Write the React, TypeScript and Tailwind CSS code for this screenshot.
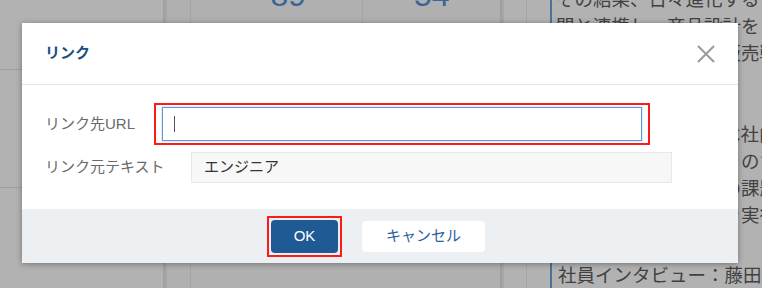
const FONT = "font-['Liberation_Sans','Noto_Sans_CJK_JP',sans-serif]";

// 右カラムの本文（モーダルの後ろに隠れる部分も含めて1行ずつ）
const ARTICLE_LINES = [
  "その結果、日々進化する",
  "門と連携し、商品設計を",
  "新たな市場に向けた販売戦略",
  "を立案しています。",
  "",
  "このように、私たちは社内",
  "地域に根ざす店舗作りのため",
  "に取り組み、現場での課題を",
  "解決するための施策を実行",
];

function CloseIcon() {
  return (
    <svg width="18" height="18" viewBox="0 0 18 18" fill="none">
      <path d="M1 1L17 17M17 1L1 17" stroke="#9a9a9a" strokeWidth="2" />
    </svg>
  );
}

function BackgroundPage() {
  return (
    <div className="flex h-full w-full bg-white">
      {/* サイドバー */}
      <div className="flex w-[163px] shrink-0 flex-col">
        <div className="h-[70px] border-b border-[#e4e4e4]" />
        <div className="h-[118px] border-b border-[#e4e4e4]" />
      </div>
      <div className="w-[4px] shrink-0 bg-gradient-to-r from-[#e2e2e2] to-[#f2f2f2]" />

      {/* 中央：数値カード */}
      <div className="flex w-[333px] shrink-0 flex-col bg-[#fdfdfd]">
        <div className="ml-[23px] flex h-[250px] border-l border-[#ececec]">
          <div className="flex w-[173px] justify-center border-r border-[#ececec] pl-[23px]">
            <span className="-mt-[21px] text-[32px] leading-none text-[#4f93d8]">89</span>
          </div>
          <div className="flex w-[137px] justify-center">
            <span className="-mt-[21px] text-[32px] leading-none text-[#4f93d8]">54</span>
          </div>
        </div>
        <div className="ml-[23px] mt-[25px] h-[40px] border-l border-t border-[#ececec]" />
      </div>
      <div className="w-[4px] shrink-0 bg-gradient-to-r from-[#e0e0e0] to-[#f4f4f4]" />

      <div className="w-[23px] shrink-0 border-r border-[#ececec]" />
      <div className="w-[23px] shrink-0" />

      {/* 右カラム：記事 */}
      <div className="flex min-w-0 flex-1 flex-col">
        <div className="-mt-[14px] border-l-2 border-[#6fa4d6] pl-[4px] text-[18.5px] leading-[27px] text-[#5e5e5e]">
          {ARTICLE_LINES.map((line, i) => (
            <div key={i} className="h-[27px] whitespace-nowrap">
              {line}
            </div>
          ))}
        </div>
        <div className="mt-[33px] whitespace-nowrap border-l-2 border-[#6fa4d6] pl-[6px] text-[18.5px] leading-[27px] text-[#5e5e5e]">
          社員インタビュー：藤田健
        </div>
      </div>
    </div>
  );
}

function LinkDialog() {
  return (
    <div className="absolute left-[22px] top-[23px] flex w-[716px] flex-col bg-white shadow-[0_1px_6px_rgba(0,0,0,0.35)]">
      {/* ヘッダー */}
      <div className="flex h-[62px] items-center justify-between border-b border-[#e6e6e6] px-[23px]">
        <h2 className="text-[15px] font-bold text-[#1b4f7f]">リンク</h2>
        <button className="flex h-[18px] w-[18px] items-center justify-center">
          <CloseIcon />
        </button>
      </div>

      {/* 入力欄 */}
      <div className="px-[23px] pb-[26px] pt-[18px]">
        <div className="flex items-center">
          <label className="w-[109px] shrink-0 text-[15px] text-[#6a6a6a]">リンク先URL</label>
          <div className="w-[496px] border-2 border-[#ff1a1a] px-[6px] py-[2px]">
            <div className="flex h-[34px] items-center border border-[#5b9bd5] px-[11px] shadow-[0_0_1px_#5b9bd5]">
              <span className="h-[16px] w-px bg-[#555]" />
            </div>
          </div>
        </div>
        <div className="mt-[7px] flex items-center">
          <label className="w-[146px] shrink-0 text-[15px] text-[#6a6a6a]">リンク元テキスト</label>
          <div className="flex h-[31px] w-[481px] items-center border border-[#e8e8e8] bg-[#f7f7f7] px-[12px] text-[15px] text-[#333]">
            エンジニア
          </div>
        </div>
      </div>

      {/* フッター */}
      <div className="flex h-[54px] items-center justify-center bg-[#edf0f3] pr-[8px]">
        <div className="border-2 border-[#ff1a1a] p-[2px]">
          <button className="h-[33px] w-[67px] rounded-[4px] bg-[#1f5a95] text-[15px] text-white">
            OK
          </button>
        </div>
        <button className="ml-[20px] h-[31px] w-[123px] rounded-[4px] bg-white text-[15px] text-[#2a62a2]">
          キャンセル
        </button>
      </div>
    </div>
  );
}

export default function App() {
  return (
    <div className={`relative h-[288px] w-[762px] overflow-hidden ${FONT}`}>
      <BackgroundPage />
      <div className="absolute inset-0 bg-black/30" />
      <LinkDialog />
    </div>
  );
}
